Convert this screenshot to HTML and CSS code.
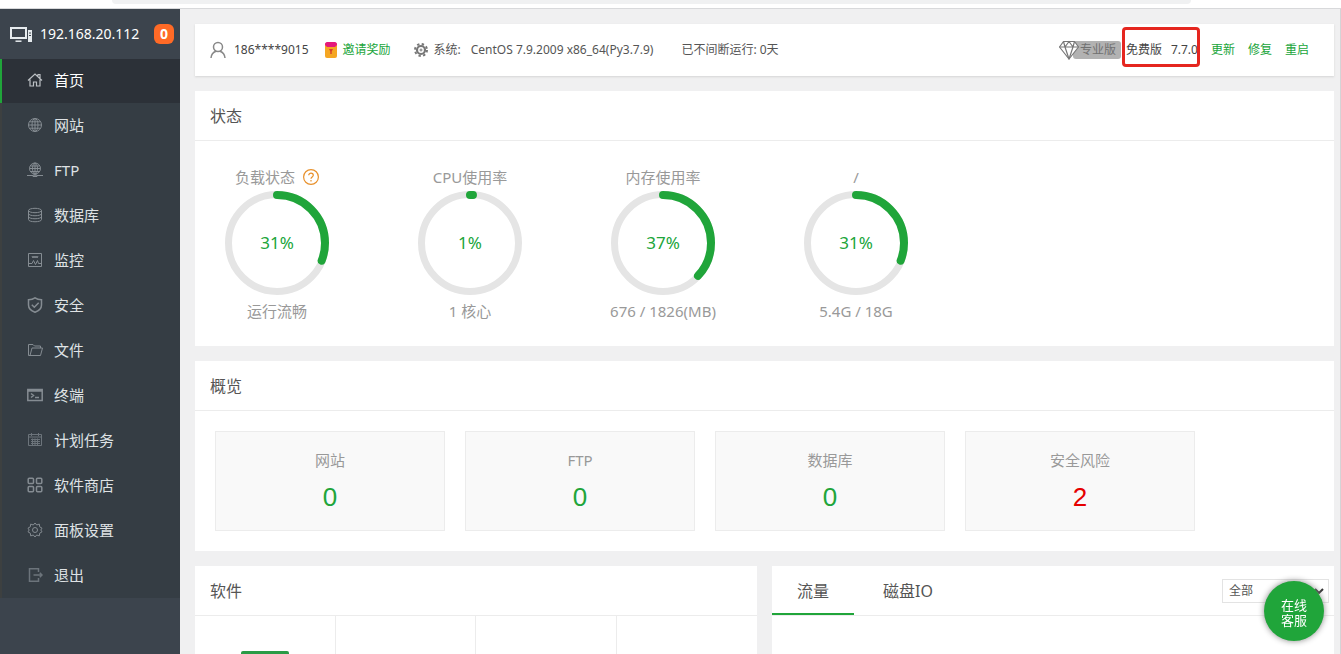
FILE: index.html
```html
<!DOCTYPE html>
<html lang="zh-CN">
<head>
<meta charset="utf-8">
<title>首页</title>
<link rel="stylesheet" href="styles.css">
</head>
<body>
<div class="toolbar"><div class="address"></div></div>
<div class="app">
  <nav class="sidebar">
    <div class="host">
      <svg class="host-icon" width="23" height="17" viewBox="0 0 23 17" fill="none" stroke="#e6ebee"><rect x="1" y="2" width="15" height="10" stroke-width="2"/><path d="M5.500 15.200h6" stroke-width="1.500"/><rect x="18" y="4" width="4" height="12" fill="#e6ebee" stroke="none"/><path d="M19 7h2M19 9.500h2" stroke="#3c444d"/></svg>
      <span class="host-ip">192.168.20.112</span><span class="count">0</span>
    </div>
    <ul class="menu">
      <li><a class="active" href="#"><svg class="ico" viewBox="0 0 16 16"><path d="M1 8.500 8 2l7 6.500M3 7.500V14h3.500v-4h3v4H13V7.500M11 4V2.500h2V6"/></svg>首页</a></li>
      <li><a href="#"><svg class="ico" viewBox="0 0 16 16"><circle cx="8" cy="8" r="6.500"/><ellipse cx="8" cy="8" rx="3" ry="6.500"/><path d="M8 1.500v13M1.500 8h13M2.500 4.800h11M2.500 11.200h11"/></svg>网站</a></li>
      <li><a href="#"><svg class="ico" viewBox="0 0 16 16"><circle cx="8" cy="6.500" r="5.500"/><ellipse cx="8" cy="6.500" rx="2.500" ry="5.500"/><path d="M2.500 6.500h11M3.500 4h9M3.500 9.500h9M8 1v13M0 13.500h6M10 13.500h6M6 13h4v1.500H6z"/></svg>FTP</a></li>
      <li><a href="#"><svg class="ico" viewBox="0 0 16 16"><ellipse cx="8" cy="3.500" rx="6.500" ry="2.200"/><path d="M1.500 3.500v9c0 3 13 3 13 0v-9M1.500 6.500c0 3 13 3 13 0M1.500 9.500c0 3 13 3 13 0"/></svg>数据库</a></li>
      <li><a href="#"><svg class="ico" viewBox="0 0 16 16"><path d="M1.500 1.500h13v13h-13zM1.500 11.500H5l1.500-3 2 4 2-4 1 3h3M5 4l1 2 1-2 1 2 1-2 1 2 1-2"/></svg>监控</a></li>
      <li><a href="#"><svg class="ico bold" viewBox="0 0 16 16"><path d="M8 .8C6 2.300 4 2.700 1.500 2.700V8c0 3.500 3 6 6.500 7.300C11.500 14 14.500 11.500 14.500 8V2.700C12 2.700 10 2.300 8 .8zM4.800 7.800l2.500 2.500 4.400-4.500"/></svg>安全</a></li>
      <li><a href="#"><svg class="ico" viewBox="0 0 16 16"><path d="M3 13.500H1.500v-11H6L7.500 4h6v2M3 13.500 5 6h10.500l-2 7.500z"/></svg>文件</a></li>
      <li><a href="#"><svg class="ico bold" viewBox="0 0 16 16"><path d="M.8 2.500h14.400v11H.8zM.8 4h14.400M4 6.500l2.500 2L4 10.500M8 10.500h4"/></svg>终端</a></li>
      <li><a href="#"><svg class="ico dim" viewBox="0 0 16 16"><path d="M1.500 2.500h13v11h-13zM1.500 5h13M4.500 1v3M11.500 1v3M4 7.500h9M4 9.500h9M4 11.500h9M5.500 6.500V13M8 6.500V13M10.500 6.500V13"/></svg>计划任务</a></li>
      <li><a href="#"><svg class="ico bold" viewBox="0 0 16 16"><rect x="1.200" y="1.200" width="5.300" height="5.300" rx="1"/><rect x="9.500" y="1.200" width="5.300" height="5.300" rx="1"/><rect x="1.200" y="9.500" width="5.300" height="5.300" rx="1"/><rect x="9.500" y="9.500" width="5.300" height="5.300" rx="1"/></svg>软件商店</a></li>
      <li><a href="#"><svg class="ico" viewBox="0 0 16 16"><path d="M8 1l1.700 2 2.600-.9.400 2.700L15 6.200 13.800 8l1.200 1.800-2.300 1.400-.4 2.700-2.600-.9L8 15l-1.700-2-2.600.9-.4-2.700L1 9.800 2.200 8 1 6.200l2.300-1.400.4-2.700 2.600.9z"/><circle cx="8" cy="8" r="2.500"/></svg>面板设置</a></li>
      <li><a href="#"><svg class="ico bold dim" viewBox="0 0 16 16"><path d="M11.500 5V1.800h-9v12.400h9V11M6.500 8H15M12.800 5.800 15 8l-2.200 2.200"/></svg>退出</a></li>
    </ul>
  </nav>

  <main class="main">
    <header class="card topbar">
      <div class="info">
        <span class="user"><svg width="16" height="18" viewBox="0 0 16 18" fill="none" stroke="#888" stroke-width="1.500"><circle cx="8" cy="6" r="4.500"/><path d="M1 17c.3-4 2.500-6 5-6.800M15 17c-.3-4-2.500-6-5-6.800"/></svg>186****9015</span>
        <a class="invite" href="#"><svg width="12" height="16" viewBox="0 0 12 16"><rect y="1" width="12" height="15" rx="2" fill="#f5a623"/><path d="M0 2C0 1 1 0 2 0h8c1 0 2 1 2 2v1L10 5H2L0 3z" fill="#e5197b"/><path d="M4 7h4L6.700 9.500V12H5.300V9.500z" fill="#d6402b"/></svg>邀请奖励</a>
        <span class="system"><svg width="14" height="14" viewBox="0 0 14 14" fill="none" stroke="#777"><circle cx="7" cy="7" r="4" stroke-width="2.200"/><circle cx="7" cy="7" r="6" stroke-width="2" stroke-dasharray="2.350 2.362"/><circle cx="7" cy="7" r="1" stroke-width="1"/></svg>系统:</span>
        <span class="os">CentOS 7.9.2009 x86_64(Py3.7.9)</span>
        <span>已不间断运行: 0天</span>
      </div>
      <div class="release">
        <span class="pro"><svg class="gem" width="20" height="20" viewBox="0 0 20 20" fill="#fff" stroke="#777" stroke-width="1.200" stroke-linejoin="round"><path d="M4.500 1.500h11l4 5.500L10 19 .5 7z"/><path d="M.5 7h19M6 7l4 12 4-12M4.500 1.500 6 7l4-5.500L14 7l1.500-5.500" fill="none"/></svg><span class="pro-label">专业版</span></span>
        <span class="version"><span>免费版</span><span>7.7.0</span></span>
        <a href="#">更新</a><a href="#">修复</a><a href="#">重启</a>
      </div>
    </header>

    <section class="card">
      <h2 class="title">状态</h2>
      <div class="gauges">
        <div class="gauge"><h3>负载状态<svg class="help" width="16" height="16" viewBox="0 0 16 16" fill="none" stroke="#e8912c"><circle cx="8" cy="8" r="7.400" stroke-width="1.200"/><path d="M5.700 6.300c0-3 4.600-3 4.600 0 0 1.700-2.300 1.700-2.300 3.500M8 11v1.400" stroke-width="1.200"/></svg></h3>
          <div class="dial"><svg class="ring" viewBox="0 0 104 104"><circle class="track" cx="52" cy="52" r="48.500"/><circle class="arc" cx="52" cy="52" r="48" pathLength="100" stroke-dasharray="31 100"/></svg><span class="value">31%</span></div><p>运行流畅</p></div>
        <div class="gauge"><h3>CPU使用率</h3>
          <div class="dial"><svg class="ring" viewBox="0 0 104 104"><circle class="track" cx="52" cy="52" r="48.500"/><circle class="arc" cx="52" cy="52" r="48" pathLength="100" stroke-dasharray="1 100"/></svg><span class="value">1%</span></div><p>1 核心</p></div>
        <div class="gauge"><h3>内存使用率</h3>
          <div class="dial"><svg class="ring" viewBox="0 0 104 104"><circle class="track" cx="52" cy="52" r="48.500"/><circle class="arc" cx="52" cy="52" r="48" pathLength="100" stroke-dasharray="37 100"/></svg><span class="value">37%</span></div><p>676 / 1826(MB)</p></div>
        <div class="gauge"><h3>/</h3>
          <div class="dial"><svg class="ring" viewBox="0 0 104 104"><circle class="track" cx="52" cy="52" r="48.500"/><circle class="arc" cx="52" cy="52" r="48" pathLength="100" stroke-dasharray="31 100"/></svg><span class="value">31%</span></div><p>5.4G / 18G</p></div>
      </div>
    </section>

    <section class="card">
      <h2 class="title">概览</h2>
      <div class="tiles">
        <div class="tile"><span>网站</span><a href="#">0</a></div>
        <div class="tile"><span>FTP</span><a href="#">0</a></div>
        <div class="tile"><span>数据库</span><a href="#">0</a></div>
        <div class="tile"><span>安全风险</span><a class="risk" href="#">2</a></div>
      </div>
    </section>

    <div class="columns">
      <section class="card">
        <h2 class="title">软件</h2>
        <div class="apps"><div class="app-cell"><div class="app-icon"></div></div><div class="app-cell"></div><div class="app-cell"></div><div class="app-cell"></div></div>
      </section>
      <section class="card">
        <div class="tabs">
          <button class="tab on" type="button">流量</button><button class="tab" type="button">磁盘IO</button>
          <div class="picker"><select aria-label="网卡"><option>全部</option></select><svg class="chevron" width="10" height="6" viewBox="0 0 10 6" fill="none" stroke="#333" stroke-width="2"><path d="M1 1l4 4 4-4"/></svg></div>
        </div>
      </section>
    </div>
  </main>
</div>
<button class="service" type="button">在线<br>客服</button>
</body>
</html>
```

FILE: styles.css
```css
* { box-sizing: border-box; }
body {
  margin: 0;
  height: 100vh;
  overflow: hidden;
  display: flex;
  flex-direction: column;
  background: #f0f0f1;
  color: #555;
  font: 12px/20px "Noto Sans", "Noto Sans CJK SC", sans-serif;
}
h2, h3, p, ul { margin: 0; padding: 0; font-weight: 400; }
a { color: #20a53a; text-decoration: none; }
button, select { font: inherit; color: inherit; }
svg { flex: none; }

.toolbar { flex: none; height: 9px; padding: 0 150px 0 112px; background: #fff; border-bottom: 1px solid #d8d9db; }
.address { height: 4px; background: #f0f1f2; border-radius: 0 0 8px 8px; }
.app { flex: 1; min-height: 0; display: flex; border-right: 1px solid #d4d4d6; }

.sidebar { flex: none; width: 180px; background: #3c444d; }
.host { display: flex; align-items: center; height: 50px; padding: 0 6px 0 10px; color: #fff; font-size: 14px; }
.host-ip { margin-left: 7px; }
.count { width: 20px; margin-left: auto; border-radius: 6px; background: #ff6a26; text-align: center; font-weight: 700; }
.menu { list-style: none; background: #353d44; }
.menu a { display: flex; align-items: center; gap: 11px; height: 45px; padding: 0 0 2px 25px; border-left: 2px solid #3d4040; color: #dfe2e4; font-size: 15px; }
.menu a.active { height: 44px; border-color: #20a53a; background: #2c3138; color: #fff; }
.ico { width: 16px; height: 16px; fill: none; stroke: #858c92; stroke-width: 1; }
.bold { stroke-width: 1.5; }
.dim { stroke: #6c747b; }
.active .ico { stroke: #bcc0c4; stroke-width: 1.2; }

.main { flex: 1; min-width: 0; padding: 15px 6px 0 15px; display: flex; flex-direction: column; gap: 15px; }
.card { flex: none; background: #fff; }
.topbar { display: flex; align-items: center; justify-content: space-between; height: 52px; padding: 0 25px 0 15px; box-shadow: 0 1px 2px #d5d5d5; }
.info, .release, .user, .invite, .system, .pro, .version { display: flex; align-items: center; white-space: nowrap; }
.user { gap: 8px; margin-right: 16px; color: #444; }
.invite { gap: 6px; margin-right: 23px; }
.system { gap: 6px; margin-right: 10px; }
.os { margin-right: 28px; }
.release { gap: 13px; }
.gem { position: relative; margin-right: -6px; }
.pro-label { height: 18px; padding: 0 5px 0 7px; border-radius: 3px; background: #b2b2b2; color: #707070; line-height: 18px; }
.version { position: relative; gap: 9px; margin-left: -8px; color: #444; }
.version::after { content: ""; position: absolute; inset: -13px -2px -7px -4px; border: 3px solid #e5261f; border-radius: 4px; }

.title { height: 50px; padding-left: 15px; border-bottom: 1px solid #ececec; font-size: 16px; line-height: 50px; }
.gauges { display: flex; gap: 59px; padding: 25px 15px 23px; }
.gauge { width: 134px; display: flex; flex-direction: column; align-items: center; color: #999; font-size: 15px; white-space: nowrap; }
.gauge h3 { display: flex; align-items: center; gap: 8px; height: 22px; font-size: 15px; }
.gauge p { height: 24px; line-height: 24px; margin-top: 4px; }
.dial { display: grid; place-items: center; margin-top: 3px; }
.ring, .value { grid-area: 1 / 1; }
.ring { width: 104px; height: 104px; fill: none; transform: rotate(-90deg); }
.track { stroke: #e5e5e5; stroke-width: 7; }
.arc { stroke: #20a53a; stroke-width: 8; stroke-linecap: round; }
.value { color: #20a53a; font-size: 17px; }

.tiles { display: flex; gap: 20px; padding: 20px; }
.tile { width: 230px; height: 100px; padding-top: 17px; display: flex; flex-direction: column; align-items: center; gap: 8px; border: 1px solid #ececec; background: #f9f9f9; color: #999; font-size: 15px; line-height: 22px; }
.tile a { font-family: "Liberation Sans", sans-serif; font-size: 26px; line-height: 36px; }
.tile .risk { color: #e60000; }

.columns { flex: 1; min-height: 0; display: grid; grid-template-columns: 1fr 1fr; gap: 15px; }
.apps { display: grid; grid-template-columns: repeat(4, 1fr); height: 120px; }
.app-cell { padding-top: 35px; border-right: 1px solid #ececec; }
.app-cell:last-child { border-right: 0; }
.app-icon { width: 48px; height: 48px; margin: 0 auto; border-radius: 2px; background: #2a9b46; }
.tabs { display: flex; height: 50px; border-bottom: 1px solid #ececec; }
.tab { height: 49px; padding: 0 25px; border: 0; background: none; font-size: 16px; }
.tab + .tab { padding-left: 29px; }
.tab.on { border-bottom: 2px solid #20a53a; padding-top: 2px; }
.picker { position: relative; width: 107px; height: 24px; margin: 13px 5px 0 auto; }
.picker select { width: 100%; height: 100%; padding: 0 6px; border: 1px solid #e3e3e3; background: #fff; appearance: none; }
.chevron { position: absolute; right: 5px; top: 9px; }
.service { position: fixed; right: 17px; bottom: 13px; width: 60px; height: 60px; padding: 4px 0 0; border: 0; border-radius: 50%; background: #20a53a; box-shadow: 0 0 6px #888; color: #fff; font-size: 13px; line-height: 15px; }
```
